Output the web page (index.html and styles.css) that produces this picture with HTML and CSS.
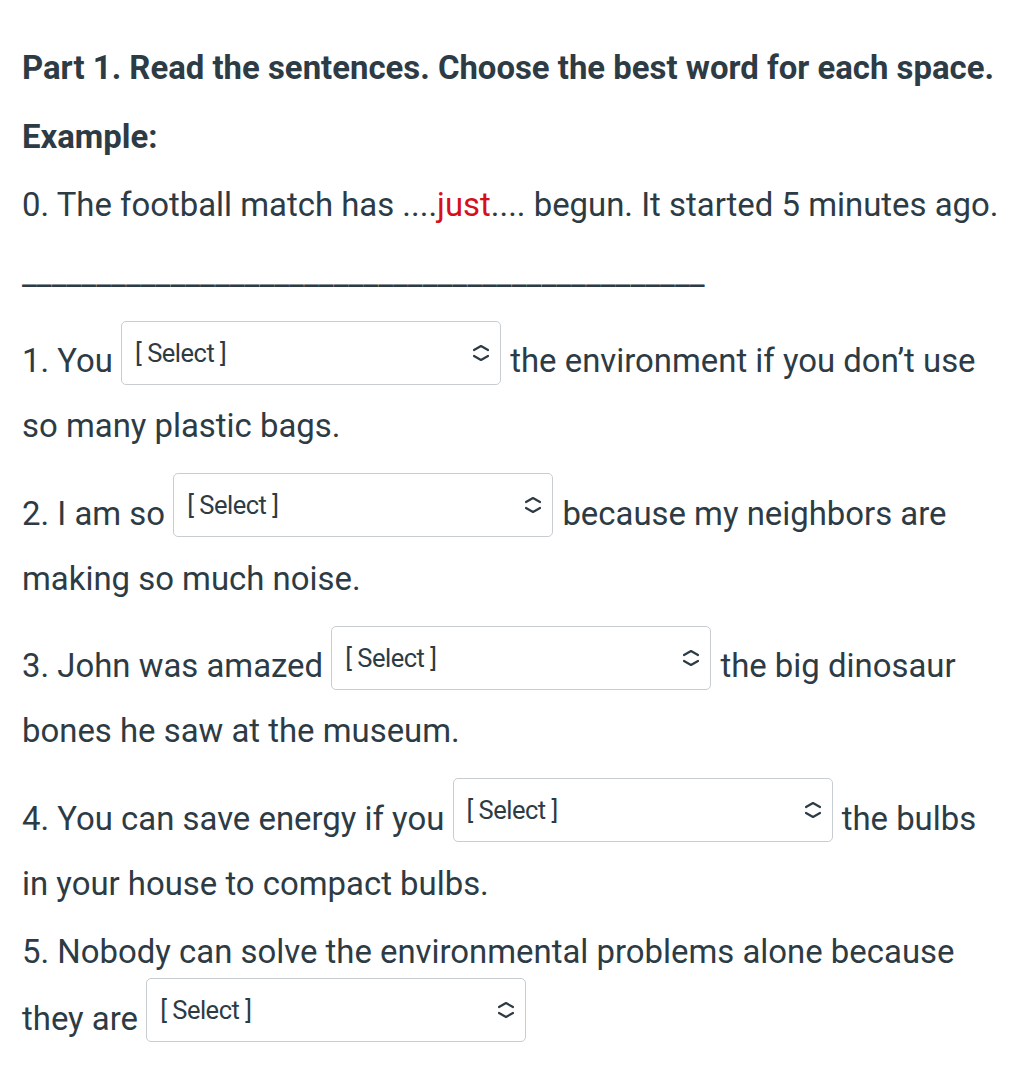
FILE: index.html
```html
<!DOCTYPE html>
<html lang="en">
<head>
<meta charset="utf-8">
<title>Quiz</title>
<link rel="stylesheet" href="styles.css">
</head>
<body>
<div class="quiz">
  <p class="title">Part 1. Read the sentences. Choose the best word for each space.</p>
  <p class="title">Example:</p>
  <p>0. The football match has ....<span class="red">just</span>.... begun. It started 5 minutes ago.</p>
  <p class="rule">______________________________________________</p>
  <p>1. You <span class="sel"><select><option>[ Select ]</option></select><svg viewBox="0 0 16 18" width="16" height="18"><path d="M1 6 L8 2 L15 6 M1 12 L8 16 L15 12" fill="none" stroke="#2d3b45" stroke-width="2.2" stroke-linecap="round" stroke-linejoin="round"/></svg></span> the environment if you don’t use so many plastic bags.</p>
  <p>2. I am so <span class="sel"><select><option>[ Select ]</option></select><svg viewBox="0 0 16 18" width="16" height="18"><path d="M1 6 L8 2 L15 6 M1 12 L8 16 L15 12" fill="none" stroke="#2d3b45" stroke-width="2.2" stroke-linecap="round" stroke-linejoin="round"/></svg></span> because my neighbors are making so much noise.</p>
  <p>3. John was amazed <span class="sel"><select><option>[ Select ]</option></select><svg viewBox="0 0 16 18" width="16" height="18"><path d="M1 6 L8 2 L15 6 M1 12 L8 16 L15 12" fill="none" stroke="#2d3b45" stroke-width="2.2" stroke-linecap="round" stroke-linejoin="round"/></svg></span> the big dinosaur bones he saw at the museum.</p>
  <p>4. You can save energy if you <span class="sel"><select><option>[ Select ]</option></select><svg viewBox="0 0 16 18" width="16" height="18"><path d="M1 6 L8 2 L15 6 M1 12 L8 16 L15 12" fill="none" stroke="#2d3b45" stroke-width="2.2" stroke-linecap="round" stroke-linejoin="round"/></svg></span> the bulbs in your house to compact bulbs.</p>
  <p>5. Nobody can solve the environmental problems alone because they are <span class="sel"><select><option>[ Select ]</option></select><svg viewBox="0 0 16 18" width="16" height="18"><path d="M1 6 L8 2 L15 6 M1 12 L8 16 L15 12" fill="none" stroke="#2d3b45" stroke-width="2.2" stroke-linecap="round" stroke-linejoin="round"/></svg></span></p>
</div>
</body>
</html>
```
FILE: styles.css
```css
html, body {
  margin: 0;
  background: #ffffff;
}
body {
  font-family: Roboto, "Liberation Sans", sans-serif;
  color: #2d3b45;
}
.quiz {
  padding: 23px 22px 0 22px;
  font-size: 32.9px;
  line-height: 47.5px;
}
.quiz p {
  margin: 21px 0;
}
.title {
  font-weight: 700;
}
.red {
  color: #d5101c;
}
.rule {
  white-space: nowrap;
}
.sel {
  position: relative;
  display: inline-block;
  vertical-align: 10.5px;
  margin: 2.5px 1px 17.5px 0;
  line-height: normal;
}
.sel select {
  appearance: none;
  -webkit-appearance: none;
  display: block;
  width: 380px;
  height: 64px;
  box-sizing: border-box;
  margin: 0;
  padding: 0 40px 0 13px;
  border: 1px solid #c7cdd1;
  border-radius: 5px;
  background: #ffffff;
  font-family: Roboto, "Liberation Sans", sans-serif;
  font-size: 25.5px;
  letter-spacing: -0.5px;
  color: #2d3b45;
}
.sel svg {
  position: absolute;
  right: 12px;
  top: 23px;
  pointer-events: none;
}
```
